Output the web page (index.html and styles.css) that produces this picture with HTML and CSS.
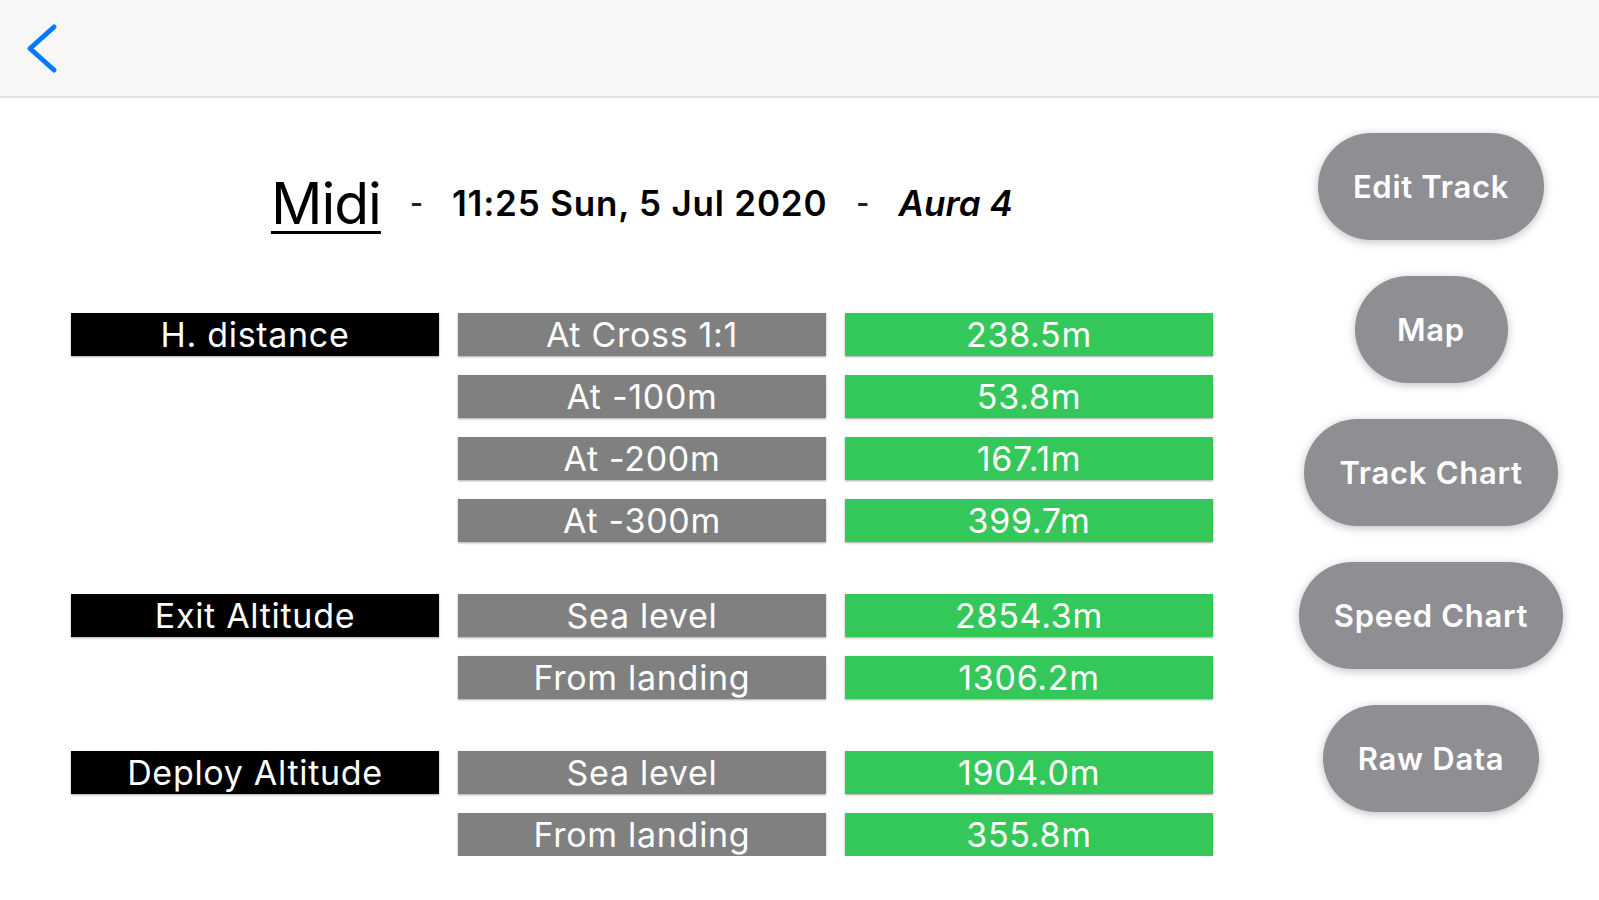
FILE: index.html
```html
<!DOCTYPE html>
<html lang="en">
<head>
    <meta charset="UTF-8">
    <meta name="viewport" content="width=device-width, initial-scale=1.0">
    <title>Jump Details</title>
    <link rel="stylesheet" href="styles.css">
</head>
<body>
    <div class="nav-bar">
        <button class="back-button" aria-label="Back">
            <svg width="34" height="52" viewBox="0 0 34 52">
                <polyline points="28,4 4,25.5 28,47" fill="none" stroke="#007aff" stroke-width="5" stroke-linecap="round" stroke-linejoin="round"/>
            </svg>
        </button>
    </div>

    <div class="page">
        <div class="main">
            <div class="title-row">
                <span class="jump-name">Midi</span>
                <span class="separator">-</span>
                <span class="jump-date">11:25 Sun, 5 Jul 2020</span>
                <span class="separator">-</span>
                <span class="jump-canopy">Aura 4</span>
            </div>

            <div class="stats">
                <div class="stat-group">
                    <div class="cell label-cell">H. distance</div>
                    <div class="cell key-cell">At Cross 1:1</div>
                    <div class="cell value-cell">238.5m</div>
                    <div class="cell key-cell">At -100m</div>
                    <div class="cell value-cell">53.8m</div>
                    <div class="cell key-cell">At -200m</div>
                    <div class="cell value-cell">167.1m</div>
                    <div class="cell key-cell">At -300m</div>
                    <div class="cell value-cell">399.7m</div>
                </div>
                <div class="stat-group">
                    <div class="cell label-cell">Exit Altitude</div>
                    <div class="cell key-cell">Sea level</div>
                    <div class="cell value-cell">2854.3m</div>
                    <div class="cell key-cell">From landing</div>
                    <div class="cell value-cell">1306.2m</div>
                </div>
                <div class="stat-group">
                    <div class="cell label-cell">Deploy Altitude</div>
                    <div class="cell key-cell">Sea level</div>
                    <div class="cell value-cell">1904.0m</div>
                    <div class="cell key-cell">From landing</div>
                    <div class="cell value-cell">355.8m</div>
                </div>
            </div>
        </div>

        <div class="actions">
            <button class="pill-button">Edit Track</button>
            <button class="pill-button">Map</button>
            <button class="pill-button">Track Chart</button>
            <button class="pill-button">Speed Chart</button>
            <button class="pill-button">Raw Data</button>
        </div>
    </div>
</body>
</html>
```

FILE: styles.css
```css
body {
    font-family: Inter, "Noto Sans", "Liberation Sans", sans-serif;
    margin: 0;
    padding: 0;
    background-color: #fff;
    color: #000;
}
.nav-bar {
    height: 96px;
    background-color: #f7f7f7;
    border-bottom: 2px solid #e2e2e2;
    display: flex;
    align-items: center;
    padding-left: 26px;
}
.back-button {
    background: none;
    border: none;
    padding: 0;
    margin-top: 2px;
    display: flex;
    cursor: pointer;
}
.page {
    display: flex;
}
.main {
    margin-left: 71px;
    width: 1142px;
    padding-top: 70px;
}
.title-row {
    height: 70px;
    display: flex;
    align-items: center;
    justify-content: center;
}
.jump-name {
    font-size: 57px;
    font-weight: 400;
    text-decoration: underline;
    text-decoration-thickness: 3px;
    text-underline-offset: 7px;
    letter-spacing: -1px;
}
.separator {
    font-size: 28px;
    font-weight: 600;
    color: #222;
    margin: 0 29px;
}
.jump-date {
    font-size: 35px;
    font-weight: 600;
    letter-spacing: 0.8px;
}
.jump-canopy {
    font-size: 35px;
    font-weight: 600;
    font-style: italic;
    letter-spacing: 0.1px;
}
.stats {
    margin-top: 75px;
    display: flex;
    flex-direction: column;
    gap: 52px;
}
.stat-group {
    display: grid;
    grid-template-columns: 368px 368px 368px;
    grid-auto-rows: 43px;
    column-gap: 19px;
    row-gap: 19px;
}
.cell {
    display: flex;
    align-items: center;
    justify-content: center;
    color: #fff;
    font-size: 34px;
    letter-spacing: 0.7px;
    box-shadow: 0 1px 2px rgba(0, 0, 0, 0.35);
    white-space: nowrap;
}
.label-cell {
    grid-column: 1;
    background-color: #000;
}
.key-cell {
    grid-column: 2;
    background-color: #808080;
}
.value-cell {
    grid-column: 3;
    background-color: #34c759;
}
.actions {
    margin-left: auto;
    width: 336px;
    padding-top: 35px;
    display: flex;
    flex-direction: column;
    align-items: center;
    gap: 36px;
}
.pill-button {
    height: 107px;
    min-width: 153px;
    padding: 0 35px;
    border: none;
    border-radius: 54px;
    background-color: #8e8e93;
    color: #fff;
    font-family: inherit;
    font-size: 31px;
    font-weight: 600;
    letter-spacing: 0.7px;
    box-shadow: 0 2px 10px rgba(0, 0, 0, 0.25);
    cursor: pointer;
}
```
